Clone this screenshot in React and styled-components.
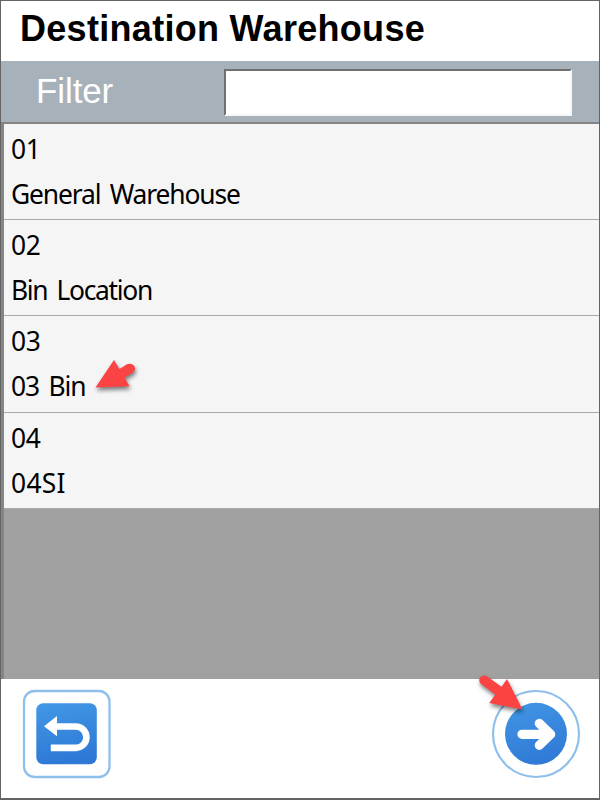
import React from "react";
import styled, { createGlobalStyle } from "styled-components";

const GlobalStyle = createGlobalStyle`
  *, *::before, *::after { box-sizing: border-box; }
  body { margin: 0; background: #fff; }
`;

const Screen = styled.main`
  position: relative;
  width: 600px;
  height: 800px;
  display: flex;
  flex-direction: column;
  overflow: hidden;
  background: #fff;
  border: 1px solid #646464;
  border-bottom-width: 2px;
  font-family: "Liberation Sans", Arial, sans-serif;
`;

const Header = styled.header`
  flex: 0 0 60px;
  padding-left: 19px;
`;

const Title = styled.h1`
  margin: 0;
  font-size: 36px;
  line-height: 56px;
  font-weight: 700;
  letter-spacing: 0.3px;
  color: #000;
  white-space: nowrap;
`;

const FilterBar = styled.div`
  flex: 0 0 61px;
  display: flex;
  align-items: flex-start;
  padding: 8px 27px 0 35px;
  background: #a7b1ba;
`;

const FilterLabel = styled.label`
  flex: 0 0 188px;
  font-size: 35px;
  line-height: 44px;
  letter-spacing: -0.1px;
  color: #fff;
`;

const FilterInput = styled.input`
  flex: 1;
  min-width: 0;
  height: 47px;
  padding: 0 8px;
  border: 2px solid;
  border-color: #707070 #f7f7f7 #f7f7f7 #707070;
  border-radius: 0;
  outline: none;
  background: #fff;
  font: 28px "Liberation Sans", sans-serif;
`;

const List = styled.ul`
  flex: 0 0 557px;
  margin: 0;
  padding: 0;
  list-style: none;
  background: #a0a0a0;
  border-top: 2px solid #858585;
  border-left: 3px solid #858585;
`;

const Row = styled.li`
  height: 96.2px;
  padding: 3px 0 0 7px;
  background: #f5f5f5;
  border-bottom: 1px solid #a9a9a9;
  font-family: "Noto Sans", sans-serif;
  font-size: 26.4px;
  color: #000;
`;

const Line = styled.div`
  height: 45px;
  line-height: 45px;
  white-space: nowrap;
  letter-spacing: ${(p) => p.$spacing}px;
  word-spacing: 3.5px;
`;

const Footer = styled.footer`
  flex: 1;
  display: flex;
  justify-content: space-between;
  padding: 10px 18px 0 21px;
`;

const IconButton = styled.button`
  width: 90px;
  height: 90px;
  padding: 0;
  border: 0;
  background: none;

  svg { display: block; }
`;

const Pointer = styled.svg`
  position: absolute;
  left: ${(p) => p.$x}px;
  top: ${(p) => p.$y}px;
  overflow: visible;
  pointer-events: none;
  filter: drop-shadow(1px 3px 2px rgba(0, 0, 0, 0.5));
`;

const rows = [
  { code: "01", name: "General Warehouse", spacing: -1.12 },
  { code: "02", name: "Bin Location", spacing: -1.3 },
  { code: "03", name: "03 Bin", spacing: -1.05 },
  { code: "04", name: "04SI", spacing: 0.3 },
];

function BackIcon() {
  return (
    <svg width="90" height="90" viewBox="0 0 90 90">
      <defs>
        <linearGradient id="backFill" x1="0" y1="0" x2="0.2" y2="1">
          <stop offset="0" stopColor="#4298e6" />
          <stop offset="1" stopColor="#2e79d6" />
        </linearGradient>
      </defs>
      <rect x="2" y="2" width="85.5" height="86" rx="10.5" fill="#fff" stroke="#8fc0ec" strokeWidth="2.3" />
      <rect x="14.3" y="14.3" width="60.5" height="61" rx="7" fill="url(#backFill)" />
      <path d="M30 37.5H53.7A10.7 10.7 0 0 1 53.7 58.9H28.8" fill="none" stroke="#fff" strokeWidth="6.6" />
      <path d="M22 37.2L35 27V47.3Z" fill="#fff" />
    </svg>
  );
}

function NextIcon() {
  return (
    <svg width="90" height="90" viewBox="0 0 90 90">
      <defs>
        <linearGradient id="nextFill" x1="0.3" y1="0" x2="0.6" y2="1">
          <stop offset="0" stopColor="#4194e4" />
          <stop offset="1" stopColor="#2e79d5" />
        </linearGradient>
      </defs>
      <circle cx="45" cy="45" r="43" fill="#fff" stroke="#8fc0ec" strokeWidth="2.2" />
      <circle cx="45" cy="44.8" r="31" fill="url(#nextFill)" />
      <path d="M31 45.3H58M48.3 34.4L59.7 45.3L48.3 56.3" fill="none" stroke="#fff" strokeWidth="9.2" strokeLinecap="round" strokeLinejoin="round" />
    </svg>
  );
}

export default function App() {
  return (
    <>
      <GlobalStyle />
      <Screen>
        <Header>
          <Title>Destination Warehouse</Title>
        </Header>
        <FilterBar>
          <FilterLabel htmlFor="filter">Filter</FilterLabel>
          <FilterInput id="filter" type="text" />
        </FilterBar>
        <List>
          {rows.map((row) => (
            <Row key={row.code}>
              <Line $spacing={-0.4}>{row.code}</Line>
              <Line $spacing={row.spacing}>{row.name}</Line>
            </Row>
          ))}
        </List>
        <Footer>
          <IconButton type="button" aria-label="Back">
            <BackIcon />
          </IconButton>
          <IconButton type="button" aria-label="Next">
            <NextIcon />
          </IconButton>
        </Footer>
        <Pointer $x={94} $y={359} width="42" height="30" viewBox="0 0 42 30">
          <path d="M0.5 27.5L19 0L24.5 9L32 4.3C38 1.5 43 8.5 38 12.5L29.5 17.5L34.5 26.3Z" fill="#fc4343" />
        </Pointer>
        <Pointer $x={478} $y={673} width="44" height="36" viewBox="0 0 44 36">
          <path d="M43.5 35.5L28 5L22.5 12.8L8.5 2.7C3-1.5-3 6 2.3 10.2L16.3 20.5L10.3 29Z" fill="#fc4343" />
        </Pointer>
      </Screen>
    </>
  );
}
